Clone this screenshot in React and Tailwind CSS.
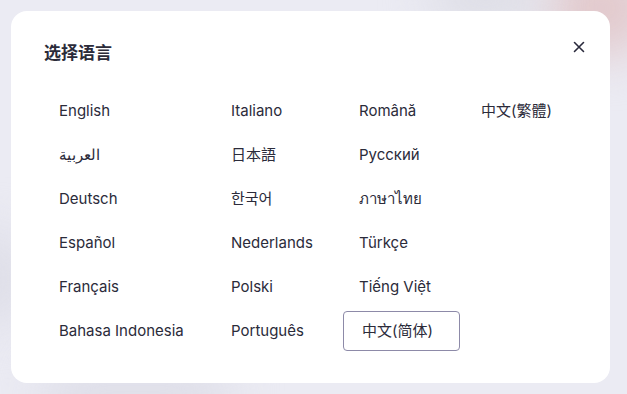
const languages = [
  ["English", "Italiano", "Română", "中文(繁體)"],
  ["العربية", "日本語", "Русский", null],
  ["Deutsch", "한국어", "ภาษาไทย", null],
  ["Español", "Nederlands", "Türkçe", null],
  ["Français", "Polski", "Tiếng Việt", null],
  ["Bahasa Indonesia", "Português", "中文(简体)", null],
];

const selected = "中文(简体)";

export default function App() {
  return (
    <div
      className="relative w-[627px] h-[394px] overflow-hidden bg-[#ebebf3] p-[11px] text-[#2b2b3a]"
      style={{ fontFamily: 'Inter, "Noto Sans", "Noto Sans CJK SC", sans-serif' }}
    >
      {/* blurry page behind the modal */}
      <div className="absolute -top-10 right-[-30px] w-28 h-24 rounded-full bg-[#e2c9cc] blur-xl" />
      <div className="absolute -top-8 left-[430px] w-28 h-14 rounded-full bg-[#dcdce4] blur-xl" />
      <div className="absolute top-[230px] -left-10 w-16 h-24 rounded-full bg-[#dcdce6] blur-xl" />
      <div className="absolute -bottom-8 left-[40px] w-48 h-16 rounded-full bg-[#dedee8] blur-xl" />

      <div className="relative w-[599px] h-[372px] rounded-2xl bg-white px-8 pt-[30px]">
        <button className="absolute top-[29px] right-[24px] w-[14px] h-[14px] flex items-center justify-center text-[#2a2a3c]">
          <svg width="12" height="12" viewBox="0 0 12 12" fill="none" stroke="currentColor" strokeWidth="1.6" strokeLinecap="round">
            <path d="M1.5 1.5l9 9M10.5 1.5l-9 9" />
          </svg>
        </button>

        <h2 className="pl-[1px] text-[17px] leading-6 font-bold text-[#2b2b39]">选择语言</h2>

        <div className="mt-[26px] grid grid-cols-[172px_128px_122px_auto] auto-rows-[40px] gap-y-1">
          {languages.flat().map((lang, i) =>
            lang ? (
              <div
                key={i}
                className={
                  lang === selected
                    ? "w-[117px] flex items-center pl-[18px] rounded border border-[#8d8aa8] text-[15px]"
                    : "flex items-center pl-4 text-[15px]"
                }
              >
                {lang}
              </div>
            ) : (
              <div key={i} />
            )
          )}
        </div>
      </div>
    </div>
  );
}
